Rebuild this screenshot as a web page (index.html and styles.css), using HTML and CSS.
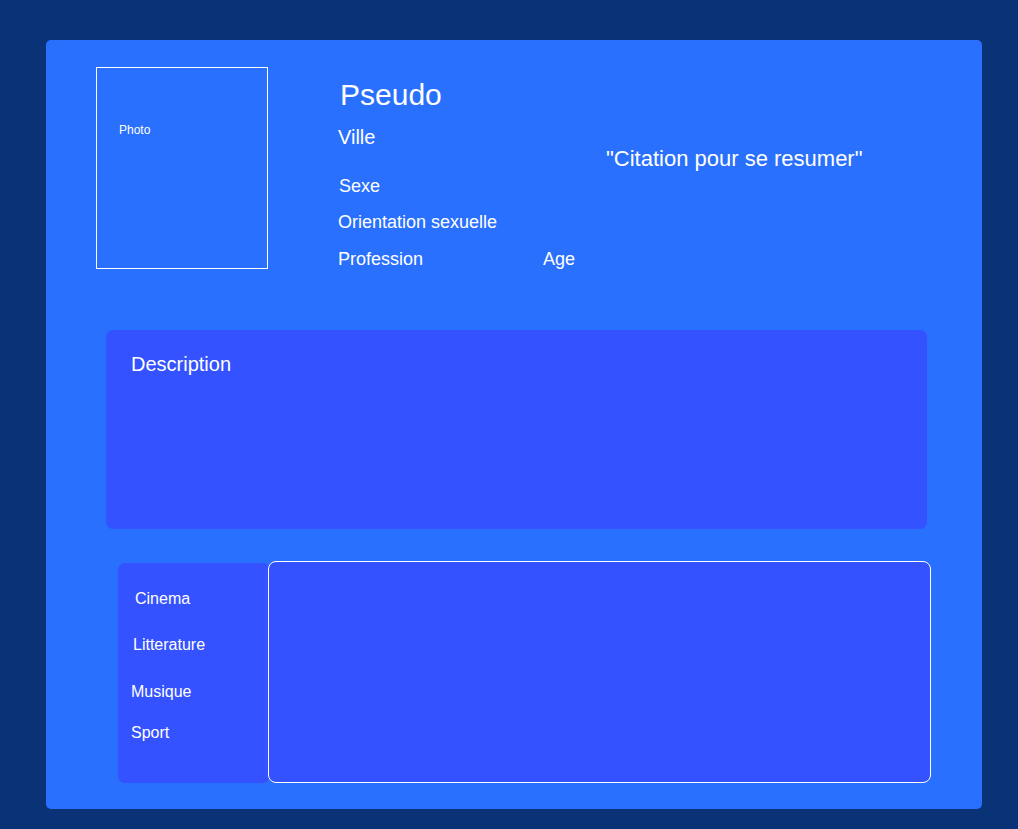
FILE: index.html
```html
<!DOCTYPE html>
<html lang="fr">
<head>
<meta charset="utf-8">
<title>Profil</title>
<link rel="stylesheet" href="styles.css">
</head>
<body>
<main class="card">
  <section class="header">
    <div class="photo"><span class="photo-label">Photo</span></div>
    <div class="info">
      <h1 class="pseudo">Pseudo</h1>
      <p class="ville">Ville</p>
      <p class="field sexe">Sexe</p>
      <p class="field orient">Orientation sexuelle</p>
      <div class="row">
        <p class="field prof">Profession</p>
        <p class="field age">Age</p>
      </div>
    </div>
    <p class="quote">"Citation pour se resumer"</p>
  </section>
  <section class="description">
    <h2 class="desc-title">Description</h2>
  </section>
  <section class="interests">
    <nav class="tabs">
      <span class="tab t-cinema">Cinema</span>
      <span class="tab t-litt">Litterature</span>
      <span class="tab t-musique">Musique</span>
      <span class="tab t-sport">Sport</span>
    </nav>
    <div class="content"></div>
  </section>
</main>
</body>
</html>
```

FILE: styles.css
```css
* { box-sizing: border-box; }
html, body { margin: 0; padding: 0; }
body {
  background: #0a3277;
  font-family: "Liberation Sans", Arial, sans-serif;
  color: #ffffff;
  padding: 40px 0 20px 46px;
}
.card {
  width: 936px;
  height: 769px;
  background: #2970fe;
  border-radius: 5px;
  padding-top: 27px;
  overflow: hidden;
}
.header {
  display: flex;
  align-items: flex-start;
  padding-left: 50px;
}
.photo {
  width: 172px;
  height: 202px;
  border: 1px solid #ffffff;
  padding: 56px 0 0 22px;
  flex: none;
}
.photo-label {
  display: block;
  font-size: 12px;
  line-height: 12px;
}
.info {
  width: 268px;
  margin-left: 70px;
  margin-top: 13px;
  flex: none;
}
.info p, .info h1 { margin: 0; font-weight: normal; }
.pseudo {
  font-size: 30px;
  line-height: 30px;
  margin-left: 2px !important;
}
.ville {
  font-size: 20px;
  line-height: 20px;
  margin-top: 17px !important;
}
.field {
  font-size: 18px;
  line-height: 18px;
}
.sexe { margin: 30px 0 0 1px !important; }
.orient { margin-top: 18px !important; }
.row {
  display: flex;
  margin-top: 19px;
}
.prof { width: 205px; }
.quote {
  margin: 81px 0 0 0;
  font-size: 22px;
  line-height: 22px;
}
.description {
  margin: 61px 0 0 60px;
  width: 821px;
  height: 199px;
  background: #3452ff;
  border-radius: 7px;
  padding: 24px 0 0 25px;
}
.desc-title {
  margin: 0;
  font-size: 20px;
  line-height: 20px;
  font-weight: normal;
}
.interests {
  display: flex;
  align-items: flex-start;
  margin: 32px 0 0 72px;
}
.tabs {
  width: 152px;
  height: 220px;
  margin-top: 2px;
  background: #3452ff;
  border-radius: 7px;
  display: flex;
  flex-direction: column;
  align-items: flex-start;
  padding: 28px 0 0 13px;
  flex: none;
}
.tab {
  font-size: 16px;
  line-height: 16px;
}
.t-cinema { margin-left: 4px; }
.t-litt { margin: 30px 0 0 2px; }
.t-musique { margin-top: 31px; }
.t-sport { margin-top: 25px; }
.content {
  width: 663px;
  height: 222px;
  margin-left: -2px;
  background: #3452ff;
  border: 1px solid #ffffff;
  border-radius: 8px;
  flex: none;
}
```
